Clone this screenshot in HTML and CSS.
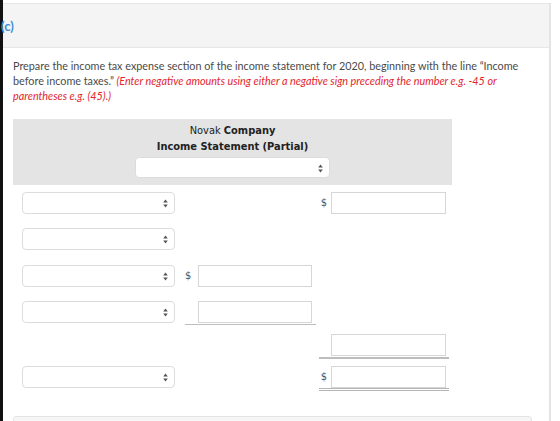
FILE: index.html
```html
<!DOCTYPE html>
<html lang="en">
<head>
<meta charset="utf-8">
<title>Part (c)</title>
<link rel="stylesheet" href="styles.css">
</head>
<body>
<div class="page">
  <div class="rail"></div>
  <div class="panel">
    <div class="part-head"><span class="part-label">(c)</span></div>
    <div class="part-body">
      <p class="prompt">Prepare the income tax expense section of the income statement for 2020, beginning with the line “Income before income taxes.” <em class="hint">(Enter negative amounts using either a negative sign preceding the number e.g. -45 or parentheses e.g. (45).)</em></p>

      <div class="sheet">
        <div class="sheet-head">
          <div class="co"><span class="co-name">Novak</span> <b>Company</b></div>
          <div class="co-title">Income Statement (Partial)</div>
          <span class="pick pick-wide"><select></select><svg class="arr" width="5" height="9" viewBox="0 0 5 9"><path d="M2.5 0.5L4.8 3.6H0.2Z M2.5 8.5L4.8 5.4H0.2Z" fill="#555"/></svg></span>
        </div>

        <div class="row r1">
          <span class="pick"><select></select><svg class="arr" width="5" height="9" viewBox="0 0 5 9"><path d="M2.5 0.5L4.8 3.6H0.2Z M2.5 8.5L4.8 5.4H0.2Z" fill="#555"/></svg></span>
          <div class="mid"></div>
          <div class="right"><span class="cur">$</span><input class="amt" type="text"></div>
        </div>

        <div class="row r2">
          <span class="pick"><select></select><svg class="arr" width="5" height="9" viewBox="0 0 5 9"><path d="M2.5 0.5L4.8 3.6H0.2Z M2.5 8.5L4.8 5.4H0.2Z" fill="#555"/></svg></span>
        </div>

        <div class="row r3">
          <span class="pick"><select></select><svg class="arr" width="5" height="9" viewBox="0 0 5 9"><path d="M2.5 0.5L4.8 3.6H0.2Z M2.5 8.5L4.8 5.4H0.2Z" fill="#555"/></svg></span>
          <div class="mid"><span class="cur">$</span><input class="amt" type="text"></div>
        </div>

        <div class="row r4">
          <span class="pick"><select></select><svg class="arr" width="5" height="9" viewBox="0 0 5 9"><path d="M2.5 0.5L4.8 3.6H0.2Z M2.5 8.5L4.8 5.4H0.2Z" fill="#555"/></svg></span>
          <div class="mid ruled"><input class="amt" type="text"></div>
        </div>

        <div class="row r5">
          <span class="pick-gap"></span>
          <div class="mid"></div>
          <div class="right ruled"><input class="amt" type="text"></div>
        </div>

        <div class="row r6">
          <span class="pick"><select></select><svg class="arr" width="5" height="9" viewBox="0 0 5 9"><path d="M2.5 0.5L4.8 3.6H0.2Z M2.5 8.5L4.8 5.4H0.2Z" fill="#555"/></svg></span>
          <div class="mid"></div>
          <div class="right double"><span class="cur">$</span><input class="amt" type="text"></div>
        </div>
      </div>

      <div class="next-box"></div>
    </div>
  </div>
</div>
</body>
</html>
```

FILE: styles.css
```css
html, body {
  margin: 0;
  padding: 0;
  background: #fff;
}

.page {
  display: flex;
  width: 560px;
  height: 421px;
  overflow: hidden;
}

.rail {
  width: 3px;
  flex: none;
  background: #111;
}

.panel {
  width: 546px;
  flex: none;
  margin-top: 3px;
  border-right: 2px solid #e4e4e4;
}

.part-head {
  height: 43px;
  background: #f4f4f4;
  border-top: 1px solid #e6e6e6;
  border-bottom: 1px solid #e6e6e6;
  display: flex;
  align-items: center;
}

.part-label {
  margin-left: -2px;
  font-family: Lato, "Open Sans", sans-serif;
  font-size: 13px;
  font-weight: 700;
  color: #3d8fd8;
}

.part-body {
  padding: 10px 0 0 10px;
}

.prompt {
  margin: 0;
  width: 525px;
  font-family: Lato, "Open Sans", sans-serif;
  font-size: 10.8px;
  line-height: 15px;
  color: #4a4a4a;
}

.hint {
  color: #e3262c;
  font-style: italic;
}

.sheet {
  margin-top: 16px;
  width: 439px;
}

.sheet-head {
  background: #e4e4e4;
  height: 66px;
  display: flex;
  flex-direction: column;
  align-items: center;
  padding-top: 4px;
  box-sizing: border-box;
  font-family: "DejaVu Sans", Verdana, sans-serif;
  font-size: 9.9px;
  line-height: 16px;
  color: #222;
}

.co-title {
  font-weight: 700;
}

.co-name {
  font-weight: 400;
}

.pick {
  position: relative;
  display: block;
  flex: none;
  width: 153px;
  height: 22px;
}

.pick-wide {
  width: 195px;
  height: 21px;
  margin-top: 2px;
}

.pick select {
  appearance: none;
  -webkit-appearance: none;
  display: block;
  width: 100%;
  height: 100%;
  margin: 0;
  box-sizing: border-box;
  border: 1px solid #dcdcdc;
  border-radius: 4px;
  background: #fff;
}

.arr {
  position: absolute;
  right: 7px;
  top: 50%;
  margin-top: -4px;
}

.pick-gap {
  width: 153px;
  flex: none;
}

.row {
  display: flex;
  align-items: flex-start;
  padding-left: 9px;
  font-family: "DejaVu Sans", Verdana, sans-serif;
  font-size: 10px;
  color: #555;
}

.r1 { margin-top: 7px; }
.r2 { margin-top: 14px; }
.r3 { margin-top: 15px; }
.r4 { margin-top: 14px; }
.r5 { margin-top: 9px; }
.r6 { margin-top: 7px; }

.mid {
  flex: none;
  width: 127px;
  margin-left: 10px;
  padding-right: 4px;
  display: flex;
  justify-content: flex-end;
  align-items: center;
  gap: 7px;
}

.r3 .mid {
  justify-content: space-between;
}

.right {
  flex: none;
  width: 127px;
  margin-left: 3px;
  padding-right: 3px;
  display: flex;
  justify-content: flex-end;
  align-items: center;
  gap: 4px;
}

.cur {
  line-height: 22px;
}

.amt {
  display: block;
  width: 115px;
  height: 22px;
  margin: 0;
  padding: 0;
  box-sizing: border-box;
  border: 1px solid #d6d6d6;
  border-radius: 0;
  background: #fff;
}

.mid .amt {
  width: 114px;
}

.ruled {
  border-bottom: 1px solid #bdbdbd;
  padding-bottom: 1px;
}

.right.ruled {
  border-bottom-width: 2px;
}

.double {
  border-bottom: 3px double #b5b5b5;
  padding-bottom: 0;
}

.next-box {
  margin-top: 25px;
  width: 517px;
  height: 20px;
  background: #f6f6f6;
  border: 1px solid #e4e4e4;
  border-radius: 3px;
}
```
